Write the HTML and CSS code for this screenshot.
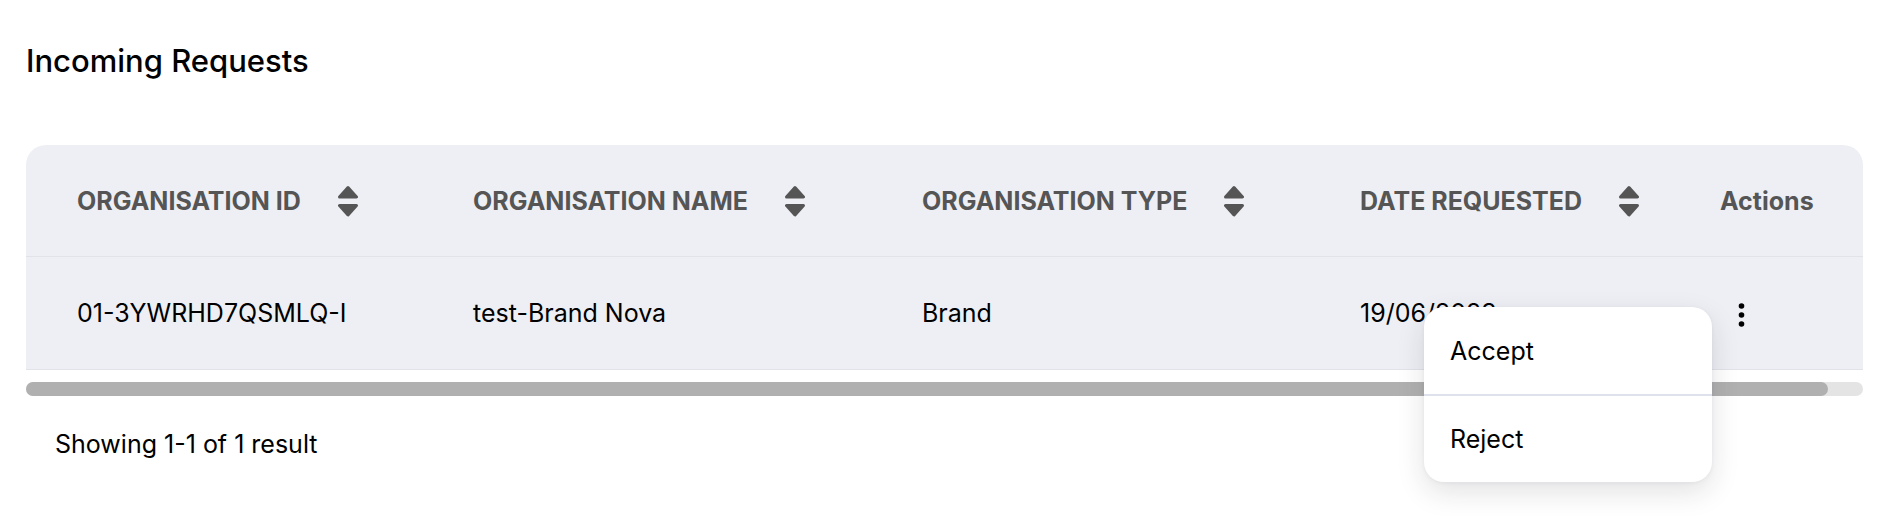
FILE: index.html
```html
<!DOCTYPE html>
<html lang="en">
<head>
<meta charset="utf-8">
<title>Incoming Requests</title>
<link rel="stylesheet" href="styles.css">
</head>
<body>
<main class="page">
  <h1 class="title">Incoming Requests</h1>

  <div class="table-wrap">
    <div class="table">
      <div class="row head">
        <div class="cell"><span>ORGANISATION ID</span>
          <svg class="sort" viewBox="0 0 20 32" aria-hidden="true"><path d="M10 2.5 L18.5 12 L1.5 12 Z"/><path d="M1.5 20.5 L18.5 20.5 L10 30 Z"/></svg>
        </div>
        <div class="cell"><span>ORGANISATION NAME</span>
          <svg class="sort" viewBox="0 0 20 32" aria-hidden="true"><path d="M10 2.5 L18.5 12 L1.5 12 Z"/><path d="M1.5 20.5 L18.5 20.5 L10 30 Z"/></svg>
        </div>
        <div class="cell"><span>ORGANISATION TYPE</span>
          <svg class="sort" viewBox="0 0 20 32" aria-hidden="true"><path d="M10 2.5 L18.5 12 L1.5 12 Z"/><path d="M1.5 20.5 L18.5 20.5 L10 30 Z"/></svg>
        </div>
        <div class="cell"><span>DATE REQUESTED</span>
          <svg class="sort" viewBox="0 0 20 32" aria-hidden="true"><path d="M10 2.5 L18.5 12 L1.5 12 Z"/><path d="M1.5 20.5 L18.5 20.5 L10 30 Z"/></svg>
        </div>
        <div class="cell actions-head">Actions</div>
      </div>
      <div class="row body">
        <div class="cell">01-3YWRHD7QSMLQ-I</div>
        <div class="cell">test-Brand Nova</div>
        <div class="cell">Brand</div>
        <div class="cell">19/06/2023</div>
        <div class="cell">
          <button class="kebab" type="button" aria-label="Actions">
            <svg viewBox="0 0 44 44" aria-hidden="true"><circle cx="21.5" cy="15" r="2.8"/><circle cx="21.5" cy="24" r="2.8"/><circle cx="21.5" cy="33" r="2.8"/></svg>
          </button>
        </div>
      </div>
    </div>
    <div class="scrollbar"><div class="thumb"></div></div>

    <div class="menu">
      <div class="menu-item">Accept</div>
      <div class="menu-item">Reject</div>
    </div>
  </div>

  <p class="summary">Showing 1-1 of 1 result</p>
</main>
</body>
</html>
```

FILE: styles.css
```css
html, body {
  margin: 0;
  padding: 0;
  background: #ffffff;
}

body {
  font-family: Inter, "Noto Sans", "Liberation Sans", sans-serif;
  color: #000000;
}

.page {
  box-sizing: border-box;
  min-height: 516px;
  padding: 41px 31px 0 26px;
}

.title {
  margin: 0;
  font-size: 31px;
  line-height: 40px;
  font-weight: 500;
  color: #000;
}

.table-wrap {
  position: relative;
  margin-top: 64px;
}

.table {
  background: #eeeff4;
  border-radius: 20px 20px 0 0;
}

.row {
  display: grid;
  grid-template-columns: 396px 449px 438px 360px 194px;
  border-bottom: 1px solid #e2e3e9;
}

.row.head {
  height: 111px;
}

.row.body {
  height: 112px;
}

.cell {
  display: flex;
  align-items: center;
  padding-left: 51px;
  font-size: 25px;
  white-space: nowrap;
}

.head .cell {
  font-weight: 700;
  color: #555555;
}

.sort {
  width: 20px;
  height: 32px;
  margin-left: 37px;
  flex: none;
}

.sort path {
  fill: #555555;
  stroke: #555555;
  stroke-width: 3;
  stroke-linejoin: round;
}

.body .cell {
  color: #000;
  font-weight: 400;
}

.kebab {
  width: 44px;
  height: 44px;
  padding: 0;
  border: 0;
  background: transparent;
  display: flex;
}

.kebab svg {
  width: 44px;
  height: 44px;
  fill: #000;
}

.scrollbar {
  margin-top: 12px;
  height: 14px;
  border-radius: 7px;
  background: #e4e4e4;
}

.thumb {
  width: 1802px;
  height: 14px;
  border-radius: 7px;
  background: #b0b0b0;
}

.menu {
  position: absolute;
  left: 1398px;
  top: 162px;
  width: 288px;
  background: #ffffff;
  border-radius: 20px;
  box-shadow: 0 10px 28px rgba(30, 30, 50, 0.13), 0 1px 4px rgba(30, 30, 50, 0.05);
  overflow: hidden;
}

.menu-item {
  height: 87px;
  display: flex;
  align-items: center;
  padding-left: 26px;
  font-size: 25px;
  color: #000;
}

.menu-item + .menu-item {
  border-top: 2px solid #dfe2ec;
  height: 86px;
}

.summary {
  margin: 32px 0 0;
  padding-left: 29px;
  font-size: 25px;
  line-height: 32px;
  color: #000;
}
```
